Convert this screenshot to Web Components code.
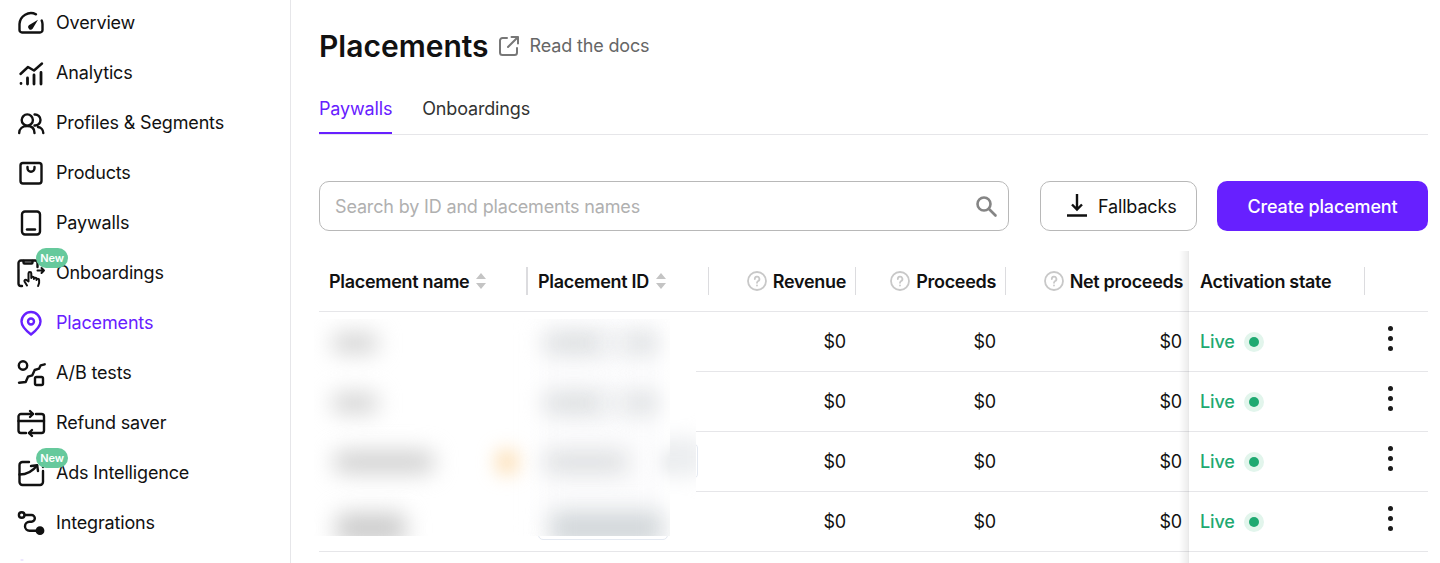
<!DOCTYPE html>
<html lang="en">
<head>
<meta charset="utf-8">
<title>Placements</title>
<style>
  html, body { margin: 0; height: 563px; overflow: hidden; background: #fff; }
  body { font-family: Inter, "Liberation Sans", sans-serif; color: #111; display: flex; letter-spacing: -0.01em; }
</style>
</head>
<body>
<app-sidebar>
  <nav-item icon="overview">Overview</nav-item>
  <nav-item icon="analytics">Analytics</nav-item>
  <nav-item icon="profiles">Profiles &amp; Segments</nav-item>
  <nav-item icon="products">Products</nav-item>
  <nav-item icon="paywalls">Paywalls</nav-item>
  <nav-item icon="onboardings" badge>Onboardings</nav-item>
  <nav-item icon="placements" active>Placements</nav-item>
  <nav-item icon="abtests">A/B tests</nav-item>
  <nav-item icon="refund">Refund saver</nav-item>
  <nav-item icon="ads" badge>Ads Intelligence</nav-item>
  <nav-item icon="integrations">Integrations</nav-item>
  <nav-item icon="peek"></nav-item>
</app-sidebar>
<main-page>
  <page-title>Placements</page-title>
  <tab-bar></tab-bar>
  <tool-bar></tool-bar>
  <placements-table></placements-table>
</main-page>

<script>
// icon paths, all drawn on a 28x28 box
const ICONS = {
  overview: `<path d="M19 5.300A11.500 11.500 0 0 0 2.500 15V21A2.500 2.500 0 0 0 5 23.500h18a2.500 2.500 0 0 0 2.500-2.500v-6a11 11 0 0 0-.8-3.500"/><path d="M11.800 16.300L21 10.800 15.600 19.800a2.500 2.500 0 0 1-3.800-3.500z" fill="currentColor" stroke="none"/>`,
  analytics: `<path d="M3.500 15L11 8l6 3.500L25 4.500"/><path d="M4 24.500v.1M10.500 19v6M17 16v9M24 13.500V25" stroke-width="2.800"/>`,
  profiles: `<circle cx="10.300" cy="11" r="5.600"/><path d="M17.500 5.500a5.500 5.500 0 0 1 6 5.500 5.500 5.500 0 0 1-6 5.500"/><path d="M2.200 24c0-4.500 3.600-7 8-7s7.300 2.500 7.300 7"/><path d="M21 18c3 .5 5.300 3 5.300 6"/>`,
  products: `<rect x="3.500" y="4" width="21" height="20.500" rx="2.500"/><path d="M10.500 8v1.200a3.500 3.500 0 0 0 7 0V8"/>`,
  paywalls: `<rect x="5" y="2.500" width="18" height="23" rx="3"/><path d="M10 20.500h8"/>`,
  onboardings: `<path d="M5 27H4a2.500 2.500 0 0 1-2.500-2.500V4A2.500 2.500 0 0 1 4 1.500h14A2.500 2.500 0 0 1 20.500 4v4"/><path d="M6.500 2v1.500a1 1 0 0 0 1 1h7a1 1 0 0 0 1-1V2"/><path d="M10 26.500L7.500 22.500a1.300 1.300 0 0 1 2.200-1.300l1.800 1.300V14.500a1.400 1.400 0 0 1 2.800 0V19a1.300 1.300 0 0 1 2.600 0v1a1.300 1.300 0 0 1 2.600 0v1a1.300 1.300 0 0 1 2.600 0V24l-1 3" stroke-width="2"/><path d="M20.500 11.500h6.500M24.500 9l2.500 2.500-2.500 2.500" stroke-width="2"/>`,
  placements: `<path d="M14 25.500c-4.500-3.500-9.500-7.500-9.500-13a9.500 9.500 0 0 1 19 0c0 5.500-5 9.500-9.500 13z"/><circle cx="14" cy="12.500" r="3"/>`,
  abtests: `<circle cx="6" cy="6.500" r="4.200"/><rect x="18" y="18" width="8" height="8" rx="1.500"/><path d="M2 23.700l6.700-.7 2.300-5.300 4.300-1.400 2.400-5.300 4.300-1.300 1.700-3.400 4-1"/>`,
  refund: `<path d="M16 5H4A2.500 2.500 0 0 0 1.500 7.500v14A2.500 2.500 0 0 0 4 24h5"/><path d="M13 2l3 3-3 3"/><path d="M19 5h5.500A2.500 2.500 0 0 1 27 7.500v14a2.500 2.500 0 0 1-2.500 2.500H12"/><path d="M15 21l-3 3 3 3"/><path d="M1.500 12h25.500"/>`,
  ads: `<path d="M12 3H5.500A3 3 0 0 0 2.500 6V23a3 3 0 0 0 3 3h17.500a3 3 0 0 0 3-3V12"/><path d="M2.500 15.500c7 0 13-3 17.500-9"/><path d="M14 7l6.200-.7.800 5.700"/><path d="M26 8v.1"/>`,
  integrations: `<circle cx="4.700" cy="6" r="2.800"/><path d="M7.700 6h6.800a3.350 3.350 0 0 1 0 6.700h-2a4.500 4.500 0 0 0 0 9H20"/><circle cx="23" cy="21.700" r="3.200" fill="currentColor"/>`,
  peek: `<path d="M4 1h2" stroke="#d9ccff" stroke-width="1"/>`
};

class NavItem extends HTMLElement {
  constructor() {
    super();
    const shadow = this.attachShadow({ mode: "open" });
    const icon = ICONS[this.getAttribute("icon")] || "";
    const badge = this.hasAttribute("badge") ? `<span class="badge">New</span>` : "";
    shadow.innerHTML = `
      <style>
        :host {
          display: flex;
          align-items: center;
          gap: 11px;
          height: 24px;
          position: relative;
          font-size: 18px;
          line-height: 24px;
          color: #111;
          white-space: nowrap;
        }
        :host([active]) { color: #6720ff; }
        svg {
          width: 28px;
          height: 28px;
          flex: none;
          fill: none;
          stroke: currentColor;
          stroke-width: 2.400;
          stroke-linecap: round;
          stroke-linejoin: round;
          overflow: visible;
        }
        .badge {
          position: absolute;
          left: 19px;
          top: -13px;
          width: 32px;
          height: 20px;
          border-radius: 10px;
          background: #66c99c;
          color: #fff;
          font-size: 11px;
          font-weight: 600;
          line-height: 20px;
          text-align: center;
        }
      </style>
      <svg viewBox="0 0 28 28">${icon}</svg>
      <span><slot></slot></span>
      ${badge}`;
  }
}

class AppSidebar extends HTMLElement {
  constructor() {
    super();
    this.attachShadow({ mode: "open" }).innerHTML = `
      <style>
        :host {
          display: flex;
          flex-direction: column;
          gap: 26px;
          flex: none;
          box-sizing: border-box;
          width: 291px;
          height: 563px;
          padding: 11px 0 0 17px;
          border-right: 1px solid #e6e6e9;
          overflow: hidden;
        }
      </style>
      <slot></slot>`;
  }
}

class MainPage extends HTMLElement {
  constructor() {
    super();
    this.attachShadow({ mode: "open" }).innerHTML = `
      <style>
        :host {
          display: block;
          flex: 1;
          min-width: 0;
          height: 563px;
          box-sizing: border-box;
          padding: 24px 12px 0 28px;
          overflow: hidden;
        }
      </style>
      <slot></slot>`;
  }
}

class PageTitle extends HTMLElement {
  constructor() {
    super();
    this.attachShadow({ mode: "open" }).innerHTML = `
      <style>
        :host { display: flex; align-items: center; height: 44px; }
        h1 { margin: 0; font-size: 30px; line-height: 44px; font-weight: 600; color: #111; letter-spacing: 0; }
        a { display: flex; align-items: center; gap: 10px; margin-left: 9px; font-size: 18px; color: #666; text-decoration: none; }
        a span { margin-top: -2px; }
        svg { width: 22px; height: 22px; fill: none; stroke: #777; stroke-width: 2; stroke-linecap: round; stroke-linejoin: round; }
      </style>
      <h1><slot></slot></h1>
      <a href="#">
        <svg viewBox="0 0 22 22"><path d="M9 3H4.500A2.500 2.500 0 0 0 2 5.500v12A2.500 2.500 0 0 0 4.500 20h12a2.500 2.500 0 0 0 2.500-2.500V13"/><path d="M10 12l10-10M13.500 2H20v6.500"/></svg>
        <span>Read the docs</span>
      </a>`;
  }
}

class TabBar extends HTMLElement {
  constructor() {
    super();
    this.attachShadow({ mode: "open" }).innerHTML = `
      <style>
        :host {
          display: flex;
          gap: 30px;
          margin-top: 24px;
          height: 42px;
          border-bottom: 1px solid #e6e6e9;
          font-size: 18px;
          color: #333;
        }
        span { box-sizing: border-box; height: 42px; line-height: 34px; }
        .on { color: #6720ff; border-bottom: 2px solid #6720ff; }
      </style>
      <span class="on">Paywalls</span>
      <span>Onboardings</span>`;
  }
}

class ToolBar extends HTMLElement {
  constructor() {
    super();
    this.attachShadow({ mode: "open" }).innerHTML = `
      <style>
        :host { display: flex; align-items: stretch; height: 50px; margin-top: 46px; font-size: 18px; }
        .search {
          box-sizing: border-box;
          width: 690px;
          display: flex;
          align-items: center;
          justify-content: space-between;
          padding: 0 9px 0 15px;
          border: 1px solid #b8b8b8;
          border-radius: 10px;
          color: #b0b0b0;
        }
        .search svg { width: 26px; height: 26px; fill: none; stroke: #858585; stroke-width: 2.600; stroke-linecap: round; }
        .fallbacks {
          box-sizing: border-box;
          width: 157px;
          margin-left: 31px;
          display: flex;
          align-items: center;
          padding-left: 24px;
          gap: 9px;
          border: 1px solid #b8b8b8;
          border-radius: 10px;
          color: #111;
        }
        .fallbacks svg { width: 24px; height: 24px; fill: none; stroke: #111; stroke-width: 2.400; }
        .create {
          width: 211px;
          margin-left: 20px;
          display: flex;
          align-items: center;
          justify-content: center;
          border-radius: 10px;
          background: #6720ff;
          color: #fff;
          font-weight: 500;
        }
      </style>
      <div class="search">
        <span>Search by ID and placements names</span>
        <svg viewBox="0 0 26 26"><circle cx="11" cy="11" r="6.500"/><path d="M16 16l6.500 6.500"/></svg>
      </div>
      <div class="fallbacks">
        <svg viewBox="0 0 24 24"><path d="M12 0v15M7 10.500l5 5 5-5M2 21.500h20"/></svg>
        <span>Fallbacks</span>
      </div>
      <div class="create">Create placement</div>`;
  }
}

const COLUMNS = "209px 181px 147px 150px 184px 175px 63px";

class TableHead extends HTMLElement {
  constructor() {
    super();
    const sort = `<svg class="sort" viewBox="0 0 10 16"><path d="M5 0l5 6H0zM5 16l5-6H0z"/></svg>`;
    const help = `<svg class="help" viewBox="0 0 20 20"><circle cx="10" cy="10" r="9"/><path d="M7.800 8a2.300 2.300 0 1 1 3.400 2c-.8.500-1.200.9-1.200 1.800M10 14.500v.1"/></svg>`;
    this.attachShadow({ mode: "open" }).innerHTML = `
      <style>
        :host {
          display: grid;
          grid-template-columns: ${COLUMNS};
          height: 61px;
          box-sizing: border-box;
          border-bottom: 1px solid #e6e6e9;
          align-items: center;
          font-size: 18px;
          font-weight: 600;
          letter-spacing: -0.017em;
          color: #111;
        }
        .c { display: flex; align-items: center; height: 28px; box-sizing: border-box; padding: 0 10px; white-space: nowrap; }
        .c.sep { border-right: 1px solid #dcdcdf; }
        .c.wide { border-right: 2px solid #dcdcdf; padding-right: 8px; }
        .num { justify-content: flex-end; gap: 6px; padding-right: 9px; }
        .net { padding-right: 7px; }
        .sort { width: 10px; height: 16px; margin-left: 7px; fill: #c4c4c4; }
        .help { width: 20px; height: 20px; fill: none; stroke: #c8c8c8; stroke-width: 1.800; stroke-linecap: round; }
      </style>
      <div class="c wide">Placement name${sort}</div>
      <div class="c sep">Placement ID${sort}</div>
      <div class="c num sep">${help}Revenue</div>
      <div class="c num sep">${help}Proceeds</div>
      <div class="c num net">${help}Net proceeds</div>
      <div class="c sep">Activation state</div>
      <div class="c"></div>`;
  }
}

class TableRow extends HTMLElement {
  constructor() {
    super();
    this.attachShadow({ mode: "open" }).innerHTML = `
      <style>
        :host {
          display: grid;
          grid-template-columns: ${COLUMNS};
          height: 60px;
          box-sizing: border-box;
          border-bottom: 1px solid #e6e6e9;
          align-items: center;
          font-size: 18px;
          color: #111;
        }
        .num { text-align: right; padding-right: 10px; }
        .net { padding-right: 8px; }
        .live { display: flex; align-items: center; gap: 9px; padding-left: 10px; color: #1fa971; font-weight: 500; }
        .dot { width: 20px; height: 20px; border-radius: 50%; background: #e2f5ec; display: flex; align-items: center; justify-content: center; }
        .dot i { width: 10px; height: 10px; border-radius: 50%; background: #1fa971; }
        .more { display: flex; flex-direction: column; align-items: center; gap: 5px; margin-top: -6px; padding-right: 13px; }
        .more i { width: 5px; height: 5px; border-radius: 50%; background: #1b1b1b; }
      </style>
      <div></div>
      <div></div>
      <div class="num">$0</div>
      <div class="num">$0</div>
      <div class="num net">$0</div>
      <div class="live">Live <span class="dot"><i></i></span></div>
      <div class="more"><i></i><i></i><i></i></div>`;
  }
}

// white patch with smudges: the reference has the names blurred out
class BlurMask extends HTMLElement {
  constructor() {
    super();
    const spot = (x, y, w, h, c, b = 11) =>
      `<i style="left:${x}px;top:${y}px;width:${w}px;height:${h}px;background:${c};filter:blur(${b}px)"></i>`;
    this.attachShadow({ mode: "open" }).innerHTML = `
      <style>
        :host { position: absolute; left: -5px; top: 68px; width: 382px; height: 217px; }
        .a, .b { position: absolute; background: #fff; overflow: hidden; }
        .a { left: 0; top: 0; width: 356px; height: 217px; }
        .b { left: 356px; top: 46px; width: 26px; height: 135px; }
        .tag { position: absolute; box-sizing: border-box; border: 1px solid #e4e9f1; border-radius: 5px; background: #fff; }
        i { position: absolute; border-radius: 8px; }
      </style>
      <div class="tag" style="left:224px;top:200px;width:130px;height:21px"></div>
      <div class="tag" style="left:340px;top:124px;width:44px;height:36px"></div>
      <div class="a">
        ${spot(225, 0, 125, 217, "#fcfcfd", 12)}
        ${spot(18, 14, 46, 20, "#d2d2d2")}
        ${spot(18, 74, 46, 20, "#d2d2d2")}
        ${spot(20, 132, 100, 22, "#cfcfcf")}
        ${spot(22, 194, 70, 30, "#cccccc")}
        ${spot(230, 14, 60, 20, "#d8dbdd")}
        ${spot(288, 16, 26, 16, "#e8eaec")}
        ${spot(313, 14, 30, 20, "#d8dbdd")}
        ${spot(230, 74, 60, 20, "#d8dbdd")}
        ${spot(288, 76, 26, 16, "#e8eaec")}
        ${spot(313, 74, 30, 20, "#d8dbdd")}
        ${spot(230, 132, 84, 22, "#dcdee0")}
        ${spot(236, 192, 113, 34, "#d2d7da")}
        ${spot(184, 132, 18, 22, "#fbd196", 10)}
        ${spot(350, 132, 40, 22, "#dfe2e5", 9)}
      </div>
      <div class="b">
        ${spot(-26, 72, 60, 40, "#eceef0", 10)}
      </div>`;
  }
}

class PlacementsTable extends HTMLElement {
  constructor() {
    super();
    this.attachShadow({ mode: "open" }).innerHTML = `
      <style>
        :host { display: block; position: relative; margin-top: 20px; }
        .shade {
          position: absolute;
          left: 860px;
          top: 0;
          width: 10px;
          height: 330px;
          background: linear-gradient(90deg, transparent, rgba(0,0,0,.07) 90%, rgba(0,0,0,.1));
          pointer-events: none;
        }
      </style>
      <table-head></table-head>
      <table-row></table-row>
      <table-row></table-row>
      <table-row></table-row>
      <table-row></table-row>
      <blur-mask></blur-mask>
      <div class="shade"></div>`;
  }
}

customElements.define("nav-item", NavItem);
customElements.define("app-sidebar", AppSidebar);
customElements.define("main-page", MainPage);
customElements.define("page-title", PageTitle);
customElements.define("tab-bar", TabBar);
customElements.define("tool-bar", ToolBar);
customElements.define("table-head", TableHead);
customElements.define("table-row", TableRow);
customElements.define("blur-mask", BlurMask);
customElements.define("placements-table", PlacementsTable);
</script>
</body>
</html>
